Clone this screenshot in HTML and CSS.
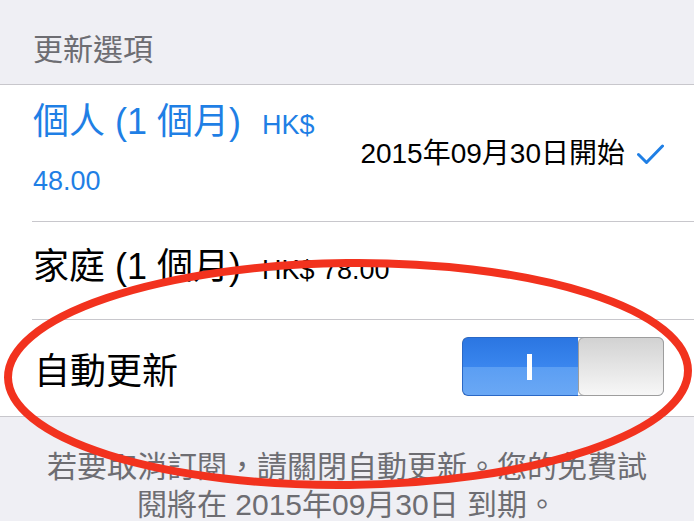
FILE: index.html
```html
<!DOCTYPE html>
<html lang="zh-Hant">
<head>
<meta charset="utf-8">
<title>更新選項</title>
<link rel="stylesheet" href="styles.css">
</head>
<body>
<div class="page">
  <div class="section-header">更新選項</div>
  <div class="list">
    <div class="row row-plan">
      <div class="plan-name blue"><span class="big">個人 (1 個月)</span><span class="mid price">HK$</span> <span class="mid">48.00</span></div>
      <div class="plan-date">2015年09月30日開始</div>
      <svg class="check" viewBox="0 0 27 21" width="27" height="21"><polyline points="1.5,10.5 9.5,18.5 25.5,2" fill="none" stroke="#1f7fe5" stroke-width="3" stroke-linecap="round" stroke-linejoin="round"/></svg>
    </div>
    <div class="row row-plan2">
      <div class="plan-name"><span class="big">家庭 (1 個月)</span><span class="mid price">HK$ 78.00</span></div>
    </div>
    <div class="row row-toggle">
      <div class="big">自動更新</div>
      <div class="toggle">
        <div class="toggle-on"><span class="toggle-bar"></span></div>
        <div class="toggle-knob"></div>
      </div>
    </div>
  </div>
  <div class="footer">若要取消訂閱，請關閉自動更新。您的免費試閱將在 2015年09月30日 到期。</div>
  <svg class="annotation" viewBox="0 0 694 521" width="694" height="521"><ellipse cx="348" cy="374" rx="340" ry="111" fill="none" stroke="#f2321e" stroke-width="8" transform="rotate(-0.6 348 374)"/></svg>
</div>
</body>
</html>
```

FILE: styles.css
```css
html, body {
  margin: 0;
  padding: 0;
  background: #efeff4;
  overflow: hidden;
}
.page {
  position: relative;
  width: 694px;
  height: 521px;
  overflow: hidden;
  font-family: "Liberation Sans", "Noto Sans CJK TC", sans-serif;
  color: #000;
}
.section-header {
  box-sizing: border-box;
  height: 85px;
  padding: 32px 0 0 33px;
  font-size: 30px;
  line-height: 36px;
  color: #6d6d72;
  border-bottom: 1px solid #c8c7cc;
}
.list {
  background: #fff;
  padding-left: 32px;
  border-bottom: 1px solid #c8c7cc;
}
.row {
  box-sizing: border-box;
  display: flex;
  align-items: center;
  padding-right: 30px;
  border-bottom: 1px solid #c8c7cc;
}
.row:last-child {
  border-bottom: none;
}
.row-plan {
  height: 137px;
}
.row-plan2 {
  height: 98px;
}
.row-toggle {
  height: 96px;
  justify-content: space-between;
}
.big {
  font-size: 36px;
}
.mid {
  font-size: 27px;
}
.blue {
  color: #1f7fe5;
}
.plan-name {
  line-height: 52px;
  margin-left: 1px;
}
.row-plan .plan-name {
  width: 320px;
  flex: 0 0 320px;
}
.price {
  margin-left: 21px;
}
.plan-date {
  margin-left: auto;
  font-size: 28px;
  line-height: 34px;
  margin-top: 2px;
}
.check {
  margin-left: 12px;
  margin-top: 2px;
}
.row-toggle .big {
  margin-left: 2px;
}
.toggle {
  display: flex;
  width: 202px;
  height: 59px;
  margin-top: -3px;
  border-radius: 6px;
  overflow: hidden;
  box-shadow: 0 0 0 1px #9fa4ab inset;
}
.toggle-on {
  flex: 1;
  display: flex;
  align-items: center;
  justify-content: center;
  padding-left: 17px;
  background: linear-gradient(#2b76e2 0%, #3a86ee 50%, #5b9ef3 51%, #6aa8f5 100%);
  border: 1px solid #2a68c6;
  border-right: none;
  border-radius: 6px 0 0 6px;
}
.toggle-bar {
  width: 5px;
  height: 26px;
  background: #fff;
}
.toggle-knob {
  box-sizing: border-box;
  width: 86px;
  background: linear-gradient(#d2d2d2, #f7f7f7);
  border: 1px solid #9d9d9d;
  border-radius: 6px;
}
.footer {
  padding: 31px 34px 0;
  font-size: 30px;
  line-height: 38px;
  text-align: center;
  color: #6d6d72;
}
.annotation {
  position: absolute;
  left: 0;
  top: 0;
  pointer-events: none;
}
```
